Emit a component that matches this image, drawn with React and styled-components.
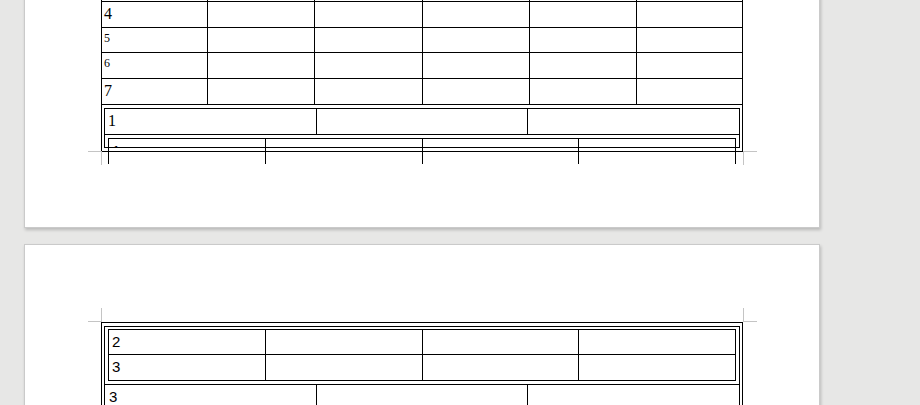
import React from "react";
import styled, { createGlobalStyle } from "styled-components";

const GlobalStyle = createGlobalStyle`
  * { box-sizing: border-box; }
  html, body {
    margin: 0;
    padding: 0;
    height: 100%;
    overflow: hidden;
    background: #e7e7e6;
  }
`;

const Workspace = styled.div`
  display: flex;
  flex-direction: column;
  gap: 16px;
  padding-left: 24px;
  height: 405px;
  overflow: hidden;
`;

const Page = styled.div`
  flex: none;
  width: 796px;
  background: #fff;
  border: 1px solid #cacaca;
  box-shadow: 1px 2px 3px rgba(0, 0, 0, 0.2);
  margin-top: ${({ $offset }) => $offset || 0}px;
  padding: ${({ $pad }) => $pad};
  display: flex;
  flex-direction: column;
`;

const MarkRow = styled.div`
  display: flex;
  justify-content: space-between;
  height: 14px;
  margin: ${({ $bottom }) => ($bottom ? "-1px -14px 0 -13px" : "0 -14px 0 -13px")};
`;

const Mark = styled.span`
  width: 14px;
  height: 14px;
  border-color: #c4c4c4;
  border-style: solid;
  border-width: 0;
  ${({ $bottom }) => ($bottom ? "border-top-width: 1px;" : "border-bottom-width: 1px;")}
  ${({ $right }) => ($right ? "border-left-width: 1px;" : "border-right-width: 1px;")}
`;

const Table = styled.div`
  display: grid;
  grid-template-columns: ${({ $cols }) => $cols};
  border-left: 1px solid #000;
  border-top: 1px solid #000;
`;

const Cell = styled.div`
  height: ${({ $h }) => $h}px;
  border-right: 1px solid #000;
  border-bottom: ${({ $open }) => ($open ? "0" : "1px solid #000")};
  padding: 4px ${({ $px }) => $px ?? 3}px 0;
  font-family: ${({ $sans }) =>
    $sans
      ? '"Liberation Sans", Arial, sans-serif'
      : '"Liberation Serif", "Times New Roman", serif'};
  font-size: ${({ $size }) => $size ?? 16}px;
  line-height: 1;
  color: #000;
`;

const NestCell = styled.div`
  grid-column: 1 / -1;
  height: ${({ $h }) => ($h ? `${$h}px` : "auto")};
  border-right: 1px solid #000;
  border-bottom: 1px solid #000;
  padding: ${({ $pad }) => $pad};
`;

// the row below the page break only shows the top of its "1"
const Clip = styled.div`
  height: 4px;
  overflow: hidden;
`;

const outerCols = "106px 107px 108px 107px 107px 106px";
const nestedCols = "212px 211px 212px";
const innerCols = "157px 157px 156px 157px";

const page1Rows = [
  { label: "", h: 26, size: 16 },
  { label: "4", h: 26, size: 16 },
  { label: "5", h: 25, size: 12 },
  { label: "6", h: 26, size: 12 },
  { label: "7", h: 26, size: 16 },
];

const Row = ({ label, h, size, count, px, sans }) =>
  Array.from({ length: count }).map((_, i) => (
    <Cell key={i} $h={h} $size={size} $px={px} $sans={sans}>
      {i === 0 ? label : null}
    </Cell>
  ));

const PageOne = () => (
  <Page $offset={-103} $pad="77px 76px 62px">
    <Table $cols={outerCols}>
      {page1Rows.map((r, i) => (
        <Row key={i} {...r} count={6} px={2} />
      ))}
      <NestCell $h={47} $pad="3px 2px 0">
        <Table $cols={nestedCols}>
          <Row label="1" h={26} size={16} count={3} px={3} />
          <NestCell $h={13} $pad="3px 3px 0">
            <Table $cols={innerCols}>
              {[0, 1, 2, 3].map((i) => (
                <Cell key={i} $h={25} $open $sans $size={15} $px={3}>
                  {i === 0 && <Clip>1</Clip>}
                </Cell>
              ))}
            </Table>
          </NestCell>
        </Table>
      </NestCell>
    </Table>
    <MarkRow $bottom>
      <Mark $bottom />
      <Mark $bottom $right />
    </MarkRow>
  </Page>
);

const PageTwo = () => (
  <Page $pad="63px 76px 200px">
    <MarkRow>
      <Mark />
      <Mark $right />
    </MarkRow>
    <Table $cols="641px">
      <NestCell $pad="3px 2px">
        <Table $cols={nestedCols}>
          <NestCell $pad="2px 3px 3px">
            <Table $cols={innerCols}>
              <Row label="2" h={25} size={15} count={4} px={3} sans />
              <Row label="3" h={26} size={15} count={4} px={3} sans />
            </Table>
          </NestCell>
          <Row label="3" h={40} size={15} count={3} px={4} sans />
        </Table>
      </NestCell>
    </Table>
  </Page>
);

export default function App() {
  return (
    <>
      <GlobalStyle />
      <Workspace>
        <PageOne />
        <PageTwo />
      </Workspace>
    </>
  );
}
